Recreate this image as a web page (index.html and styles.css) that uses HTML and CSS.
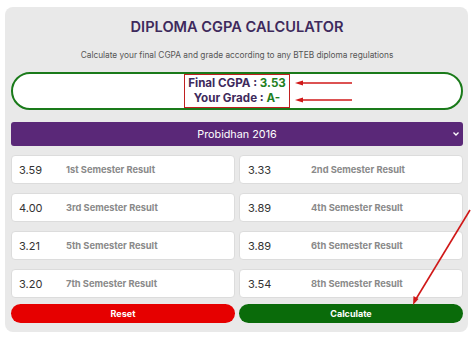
FILE: index.html
```html
<!DOCTYPE html>
<html>
<head>
<meta charset="utf-8">
<link rel="stylesheet" href="styles.css">
</head>
<body>
<div class="card">
  <h1 class="title">DIPLOMA CGPA CALCULATOR</h1>
  <p class="subtitle">Calculate your final CGPA and grade according to any BTEB diploma regulations</p>
  <div class="result">
    <div class="result-inner">
      <div>Final CGPA : <span class="val">3.53</span></div>
      <div>Your Grade : <span class="val">A-</span></div>
    </div>
  </div>
  <div class="select">
    <span>Probidhan 2016</span>
    <svg class="chev" width="8" height="6" viewBox="0 0 8 6"><path d="M1.5 1.5 L4 4 L6.5 1.5" fill="none" stroke="#fff" stroke-width="1.3"/></svg>
  </div>
  <div class="grid">
    <div class="field"><span class="num">3.59</span><span class="lbl">1st Semester Result</span></div>
    <div class="field r"><span class="num">3.33</span><span class="lbl">2nd Semester Result</span></div>
    <div class="field"><span class="num">4.00</span><span class="lbl">3rd Semester Result</span></div>
    <div class="field r"><span class="num">3.89</span><span class="lbl">4th Semester Result</span></div>
    <div class="field"><span class="num">3.21</span><span class="lbl">5th Semester Result</span></div>
    <div class="field r"><span class="num">3.89</span><span class="lbl">6th Semester Result</span></div>
    <div class="field"><span class="num">3.20</span><span class="lbl">7th Semester Result</span></div>
    <div class="field r"><span class="num">3.54</span><span class="lbl">8th Semester Result</span></div>
  </div>
  <div class="buttons">
    <div class="btn reset">Reset</div>
    <div class="btn calc">Calculate</div>
  </div>
</div>
<svg class="arrows" width="474" height="340" viewBox="0 0 474 340">
  <g stroke="#d01818" stroke-width="1.6" fill="#d01818">
    <line x1="352" y1="83" x2="300" y2="83"/>
    <path d="M295 83 L303 80.5 L303 85.5 Z" stroke="none"/>
    <line x1="352" y1="100" x2="300" y2="100"/>
    <path d="M295 100 L303 97.5 L303 102.5 Z" stroke="none"/>
    <line x1="470" y1="210" x2="416" y2="299"/>
    <path d="M413 305 L413.5 296 L418.5 299 Z" stroke="none"/>
  </g>
</svg>
</body>
</html>
```

FILE: styles.css
```css
html, body {
  margin: 0;
  padding: 0;
  background: #ffffff;
  width: 474px;
  height: 340px;
  overflow: hidden;
  font-family: Inter, "Noto Sans", sans-serif;
}
.card {
  margin: 7px 6px 0 5px;
  background: #e9e9e9;
  border-radius: 8px;
  padding: 0 5px 10px 6px;
  height: 315px;
}
.title {
  margin: 0;
  padding-top: 9px;
  height: 23px;
  line-height: 23px;
  text-align: center;
  font-size: 14.6px;
  font-weight: 600;
  color: #3e2a5c;
}
.subtitle {
  margin: 0;
  padding-top: 10px;
  height: 13px;
  line-height: 13px;
  text-align: center;
  font-size: 8.3px;
  color: #555;
}
.result {
  margin-top: 10px;
  height: 34px;
  border: 2px solid #1a7a1a;
  border-radius: 20px;
  background: #fff;
  display: flex;
  justify-content: center;
  align-items: center;
}
.result-inner {
  border: 1.5px solid #c02020;
  padding: 1px 3px;
  text-align: center;
  font-size: 11.6px;
  font-weight: 700;
  line-height: 15px;
  color: #3e2a5c;
}
.val { color: #1f7f1f; }
.select {
  margin-top: 12px;
  height: 24px;
  background: #5a2878;
  border-radius: 3px;
  color: #fff;
  font-size: 10.8px;
  display: flex;
  align-items: center;
  justify-content: center;
  position: relative;
}
.chev { position: absolute; right: 3px; top: 9px; }
.grid {
  margin-top: 9px;
  display: grid;
  grid-template-columns: 1fr 1fr;
  column-gap: 4px;
  row-gap: 9px;
}
.field {
  height: 27px;
  background: #fff;
  border: 1px solid #dcdcdc;
  border-radius: 4px;
  display: flex;
  align-items: center;
  padding-left: 7px;
}
.field.r { padding-left: 8px; }
.num {
  width: 47px;
  font-size: 11px;
  color: #333;
}
.field.r .num { width: 63px; }
.lbl {
  font-size: 9.3px;
  font-weight: 700;
  color: #8a8a8a;
}
.buttons {
  margin-top: 6px;
  display: grid;
  grid-template-columns: 1fr 1fr;
  column-gap: 4px;
}
.btn {
  height: 19px;
  border-radius: 10px;
  color: #fff;
  font-size: 9px;
  font-weight: 700;
  display: flex;
  align-items: center;
  justify-content: center;
}
.reset { background: #e60000; }
.calc { background: #0a6b0a; }
.arrows {
  position: absolute;
  left: 0;
  top: 0;
  pointer-events: none;
}
```
